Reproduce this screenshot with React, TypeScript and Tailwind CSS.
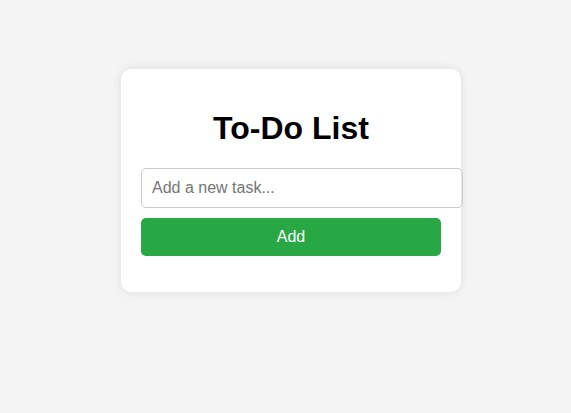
import React, { useState } from "react";

const App = () => {
  const [task, setTask] = useState("");

  return (
    <div className="min-h-[413px] bg-[#f4f4f4] pt-[69px] pl-[121px] font-['Liberation_Sans',Arial,sans-serif]">
      <div className="w-[340px] bg-white rounded-[10px] p-5 shadow-[0_0_10px_rgba(0,0,0,0.1)]">
        <h1 className="my-[21.2px] text-center text-[32px] leading-[36.8px] font-bold text-black">
          To-Do List
        </h1>
        <input
          type="text"
          value={task}
          onChange={(e) => setTask(e.target.value)}
          placeholder="Add a new task..."
          className="block w-[322px] h-10 px-2.5 border border-[#ccc] rounded-[5px] text-base text-black placeholder:text-[#757575] outline-none"
        />
        <button className="block w-[300px] h-[38px] mt-2.5 bg-[#28a745] text-white text-base rounded-[5px]">
          Add
        </button>
        <ul className="my-4 pl-10" />
      </div>
    </div>
  );
};

export default App;
